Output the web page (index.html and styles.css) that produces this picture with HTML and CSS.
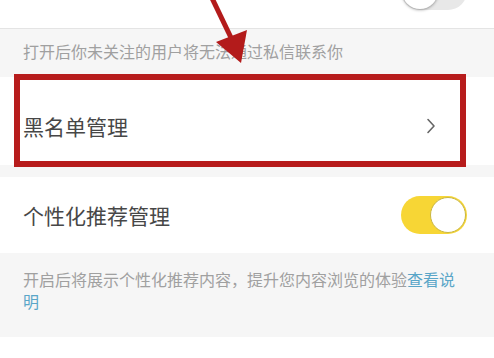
FILE: index.html
```html
<!DOCTYPE html>
<html>
    <head>
        <meta charset="utf-8">
        <link rel="stylesheet" href="styles.css">
    </head>
    <body>
        <div class="screen">
            <div class="top_row">
                <div class="switch switch_off"><div class="knob"></div></div>
            </div>
            <div class="hint hint_first">打开后你未关注的用户将无法通过私信联系你</div>
            <div class="row row_link">
                <span class="row_title">黑名单管理</span>
                <svg class="chevron" width="10" height="16" viewBox="0 0 10 16">
                    <path d="M2 1.5 L8 8 L2 14.5" fill="none" stroke="#666" stroke-width="1.6" stroke-linecap="round" stroke-linejoin="round"/>
                </svg>
            </div>
            <div class="gap"></div>
            <div class="row row_switch">
                <span class="row_title">个性化推荐管理</span>
                <div class="switch switch_on"><div class="knob"></div></div>
            </div>
            <div class="hint hint_second">开启后将展示个性化推荐内容，提升您内容浏览的体验<span class="link">查看说明</span></div>
            <div class="bottom_row"></div>

            <!-- annotation drawn over the screenshot -->
            <div class="red_box"></div>
            <svg class="arrow" width="494" height="80" viewBox="0 0 494 80">
                <line x1="211" y1="-4" x2="235" y2="46" stroke="#b31b1b" stroke-width="5"/>
                <polygon points="241,63 216,42 247,30" fill="#b31b1b"/>
            </svg>
        </div>
    </body>
</html>
```
FILE: styles.css
```css
body
{
    margin: 0;
    background-color: #ffffff;
    font-family: "Noto Sans CJK SC", "Noto Sans", sans-serif;
}
.screen
{
    position: relative;
    width: 494px;
    height: 358px;
    overflow: hidden;
    display: flex;
    flex-direction: column;
}
.top_row
{
    height: 28px;
    border-bottom: 1px solid #e4e4e4;
    background-color: #ffffff;
    display: flex;
    justify-content: flex-end;
    align-items: flex-end;
    padding-right: 27px;
}
.top_row .switch
{
    margin-bottom: 18px;
}
.hint
{
    background-color: #f6f6f6;
    color: #a0a0a0;
    font-size: 16px;
    line-height: 22px;
    padding-left: 23px;
    padding-right: 32px;
}
.hint_first
{
    height: 48px;
    box-sizing: border-box;
    padding-top: 11px;
}
.hint_second
{
    height: 84px;
    box-sizing: border-box;
    padding-top: 15px;
}
.link
{
    color: #5aa6c8;
}
.row
{
    background-color: #ffffff;
    display: flex;
    align-items: center;
    justify-content: space-between;
    padding-left: 23px;
}
.row_title
{
    font-size: 21px;
    color: #474747;
    line-height: 30px;
}
.row_link
{
    height: 88px;
    box-sizing: border-box;
    padding-top: 10px;
    padding-right: 58px;
}
.gap
{
    height: 12px;
    background-color: #f6f6f6;
}
.row_switch
{
    height: 76px;
    padding-right: 27px;
}
.bottom_row
{
    flex: 1;
    background-color: #ffffff;
}
.switch
{
    width: 66px;
    height: 38px;
    border-radius: 19px;
    position: relative;
    box-sizing: border-box;
}
.switch_off
{
    background-color: #e8e8e8;
}
.switch_on
{
    background-color: #f7d635;
}
.knob
{
    position: absolute;
    top: 1px;
    width: 36px;
    height: 36px;
    border-radius: 50%;
    background-color: #ffffff;
    box-sizing: border-box;
}
.switch_off .knob
{
    left: 1px;
    box-shadow: 0 1px 3px rgba(0,0,0,0.35);
}
.switch_on .knob
{
    right: 1px;
    border: 1.5px solid #c9b640;
}
.red_box
{
    position: absolute;
    left: 14px;
    top: 74px;
    width: 452px;
    height: 93px;
    border: 6px solid #b71c1c;
    box-sizing: border-box;
}
.arrow
{
    position: absolute;
    left: 0;
    top: 0;
}
```
